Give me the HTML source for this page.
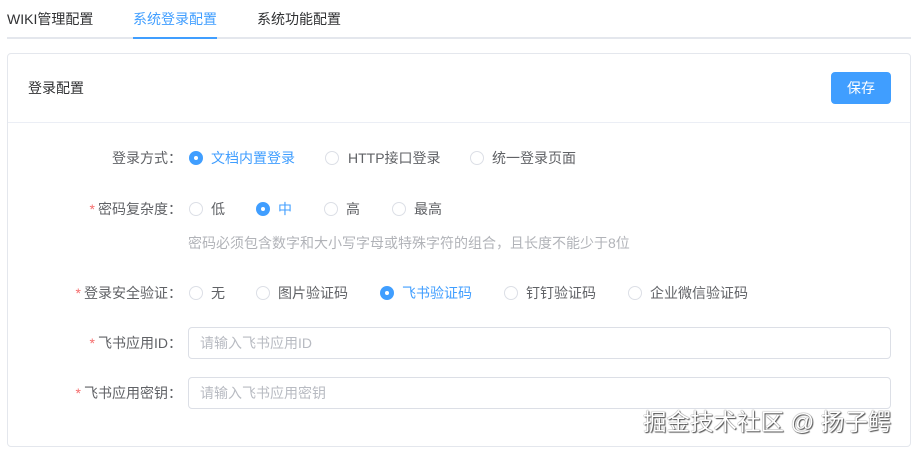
<!DOCTYPE html>
<html><head><meta charset="utf-8"><style>
*{box-sizing:border-box;margin:0;padding:0}
body{width:919px;height:453px;background:#fff;font-family:"Liberation Sans","Noto Sans CJK SC",sans-serif;font-size:14px;color:#606266;position:relative;overflow:hidden}
.a{position:absolute;white-space:nowrap}
.tab{top:10px;font-size:14px;color:#303133;line-height:18px}
.r{position:absolute;width:14px;height:14px;border:1px solid #dcdfe6;border-radius:50%;background:#fff}
.r.on{border-color:#409eff;background:#409eff}
.r.on::after{content:"";position:absolute;left:4px;top:4px;width:4px;height:4px;border-radius:50%;background:#fff}
.lbl{right:737px;text-align:right;color:#606266;line-height:18px}
.star{color:#f56c6c;margin-right:3px}
.t{line-height:18px}
.blue{color:#409eff}
.inp{position:absolute;left:188px;width:703px;height:32px;border:1px solid #dcdfe6;border-radius:4px;color:#b8bbc2;padding-left:11px;line-height:30px}
</style></head><body>
<div class="a tab" style="left:7px">WIKI管理配置</div>
<div class="a tab" style="left:133px;color:#409eff">系统登录配置</div>
<div class="a tab" style="left:257px">系统功能配置</div>
<div class="a" style="left:7px;top:37px;width:904px;height:2px;background:#e4e7ed"></div>
<div class="a" style="left:133px;top:37px;width:84px;height:2px;background:#409eff"></div>

<div class="a" style="left:7px;top:53px;width:904px;height:394px;border:1px solid #e4e7ed;border-radius:4px"></div>
<div class="a" style="left:8px;top:122px;width:902px;height:1px;background:#ebeef5"></div>
<div class="a" style="left:28px;top:79px;color:#303133;line-height:18px">登录配置</div>
<div class="a" style="left:831px;top:72px;width:60px;height:32px;background:#409eff;border-radius:4px;color:#fff;text-align:center;line-height:32px">保存</div>

<div class="a lbl" style="top:149px">登录方式：</div>
<div class="r on" style="left:189px;top:151px"></div><div class="a t blue" style="left:211px;top:149px">文档内置登录</div>
<div class="r" style="left:325px;top:151px"></div><div class="a t" style="left:348px;top:149px">HTTP接口登录</div>
<div class="r" style="left:470px;top:151px"></div><div class="a t" style="left:492px;top:149px">统一登录页面</div>

<div class="a lbl" style="top:200px"><span class="star">*</span>密码复杂度：</div>
<div class="r" style="left:189px;top:202px"></div><div class="a t" style="left:211px;top:200px">低</div>
<div class="r on" style="left:256px;top:202px"></div><div class="a t blue" style="left:278px;top:200px">中</div>
<div class="r" style="left:324px;top:202px"></div><div class="a t" style="left:346px;top:200px">高</div>
<div class="r" style="left:392px;top:202px"></div><div class="a t" style="left:414px;top:200px">最高</div>
<div class="a t" style="left:188px;top:234px;color:#b1b3b8;font-size:14px">密码必须包含数字和大小写字母或特殊字符的组合，且长度不能少于8位</div>

<div class="a lbl" style="top:284px"><span class="star">*</span>登录安全验证：</div>
<div class="r" style="left:189px;top:286px"></div><div class="a t" style="left:211px;top:284px">无</div>
<div class="r" style="left:256px;top:286px"></div><div class="a t" style="left:278px;top:284px">图片验证码</div>
<div class="r on" style="left:380px;top:286px"></div><div class="a t blue" style="left:402px;top:284px">飞书验证码</div>
<div class="r" style="left:504px;top:286px"></div><div class="a t" style="left:526px;top:284px">钉钉验证码</div>
<div class="r" style="left:628px;top:286px"></div><div class="a t" style="left:650px;top:284px">企业微信验证码</div>

<div class="a lbl" style="top:334px"><span class="star">*</span>飞书应用ID：</div>
<div class="inp" style="top:327px">请输入飞书应用ID</div>
<div class="a lbl" style="top:384px"><span class="star">*</span>飞书应用密钥：</div>
<div class="inp" style="top:377px">请输入飞书应用密钥</div>

<div class="a" style="left:643px;top:407px;font-size:23.5px;color:#fff;line-height:30px;text-shadow:0 0 1px #333,1px 1px 1px #555">掘金技术社区 @ 扬子鳄</div>
</body></html>
